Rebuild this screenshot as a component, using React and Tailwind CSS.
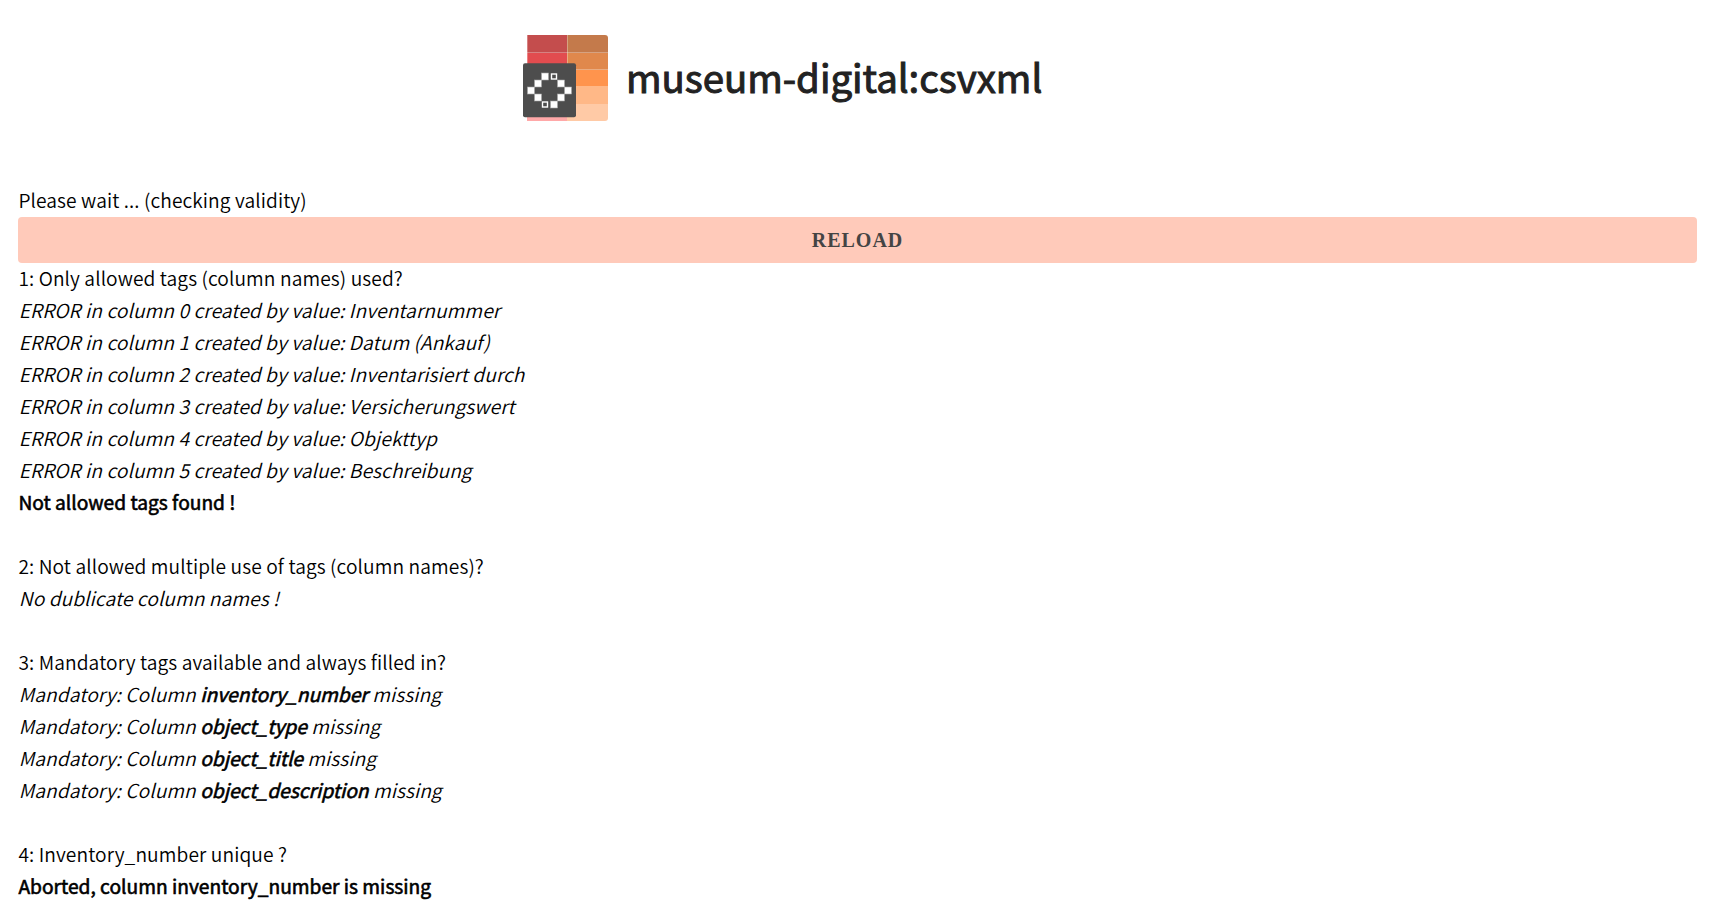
const columnErrors = [
  'Inventarnummer',
  'Datum (Ankauf)',
  'Inventarisiert durch',
  'Versicherungswert',
  'Objekttyp',
  'Beschreibung',
];

const missingColumns = ['inventory_number', 'object_type', 'object_title', 'object_description'];

function Logo() {
  return (
    <svg width="86" height="87" viewBox="0 0 86 87" className="shrink-0">
      <defs>
        <clipPath id="sheet">
          <path d="M4 0H82a3 3 0 0 1 3 3V83a3 3 0 0 1-3 3H4z" />
        </clipPath>
      </defs>
      <g clipPath="url(#sheet)">
        <rect x="4" y="0" width="41" height="18" fill="#c44d4d" />
        <rect x="4" y="18" width="41" height="17" fill="#e24c4f" />
        <rect x="4" y="35" width="41" height="51" fill="#ffa8a8" />
        <rect x="44" y="0" width="41" height="18" fill="#c47a4b" />
        <rect x="44" y="18" width="41" height="17" fill="#e0884c" />
        <rect x="44" y="35" width="41" height="16" fill="#ff944d" />
        <rect x="44" y="51" width="41" height="18" fill="#ffb887" />
        <rect x="44" y="69" width="41" height="17" fill="#ffcaa6" />
        <path d="M4 17.5H85M44.5 34.5H85M44.5 0V35M4.5 0V35" stroke="#ffffff" strokeOpacity="0.3" fill="none" />
      </g>
      <rect x="0" y="28.3" width="53" height="54" rx="2" fill="#4d4d4d" />
      <g fill="#ffffff" stroke="#a6a6a6" strokeWidth="0.6">
        <rect x="18.5" y="38" width="7" height="7" />
        <rect x="11.5" y="45" width="7" height="7" />
        <rect x="4.5" y="52" width="7" height="7" />
        <rect x="11.5" y="59" width="7" height="7" />
        <rect x="27.5" y="66" width="7" height="7" />
        <rect x="34.5" y="59" width="7" height="7" />
        <rect x="41.5" y="52" width="7" height="7" />
        <rect x="34.5" y="45" width="7" height="7" />
      </g>
      <g fill="#4d4d4d" stroke="#ffffff" strokeWidth="1.4">
        <rect x="28.5" y="39" width="5" height="5" />
        <rect x="19.5" y="67" width="5" height="5" />
      </g>
    </svg>
  );
}

export default function App() {
  return (
    <div className="h-[906px] overflow-hidden bg-white pr-[19px] pl-[18px] font-['Noto_Sans_CJK_SC','Noto_Sans',sans-serif] text-[19.2px] leading-8 font-[350] tracking-[0.1px] text-black">
      <header className="flex h-[184px] items-start pt-[35px] pl-[505px]">
        <Logo />
        <h1 className="ml-[17px] h-[82px] text-[38.4px] leading-[82px] font-normal tracking-[-0.02px] whitespace-nowrap text-[#222] [-webkit-text-stroke:1px_#222]">
          museum-digital:csvxml
        </h1>
      </header>
      <main className="whitespace-nowrap">
        <p className="pl-[0.4px]">Please wait ... (checking validity)</p>
        <button className="mt-px -mb-px block h-[46px] w-full rounded-[4px] bg-[#ffcaba] font-['Liberation_Serif',serif] text-[20px] leading-[46px] font-bold tracking-[1px] text-[#444]">
          RELOAD
        </button>
        <div className="pl-[0.4px]">
          <p>1: Only allowed tags (column names) used?</p>
          {columnErrors.map((name, i) => (
            <p key={name} className="pl-[0.4px] italic">
              ERROR in column {i} created by value: {name}
            </p>
          ))}
          <p className="font-normal tracking-normal [-webkit-text-stroke:0.6px_black]">Not allowed tags found !</p>
          <p className="mt-8">2: Not allowed multiple use of tags (column names)?</p>
          <p className="pl-[0.4px] italic">No dublicate column names !</p>
          <p className="mt-8">3: Mandatory tags available and always filled in?</p>
          {missingColumns.map((name) => (
            <p key={name} className="pl-[0.4px] italic">
              Mandatory: Column{' '}
              <b className="font-normal tracking-normal [-webkit-text-stroke:0.6px_black]">{name}</b> missing
            </p>
          ))}
          <p className="mt-8">4: Inventory_number unique ?</p>
          <p className="font-normal tracking-normal [-webkit-text-stroke:0.6px_black]">
            Aborted, column inventory_number is missing
          </p>
        </div>
      </main>
    </div>
  );
}
